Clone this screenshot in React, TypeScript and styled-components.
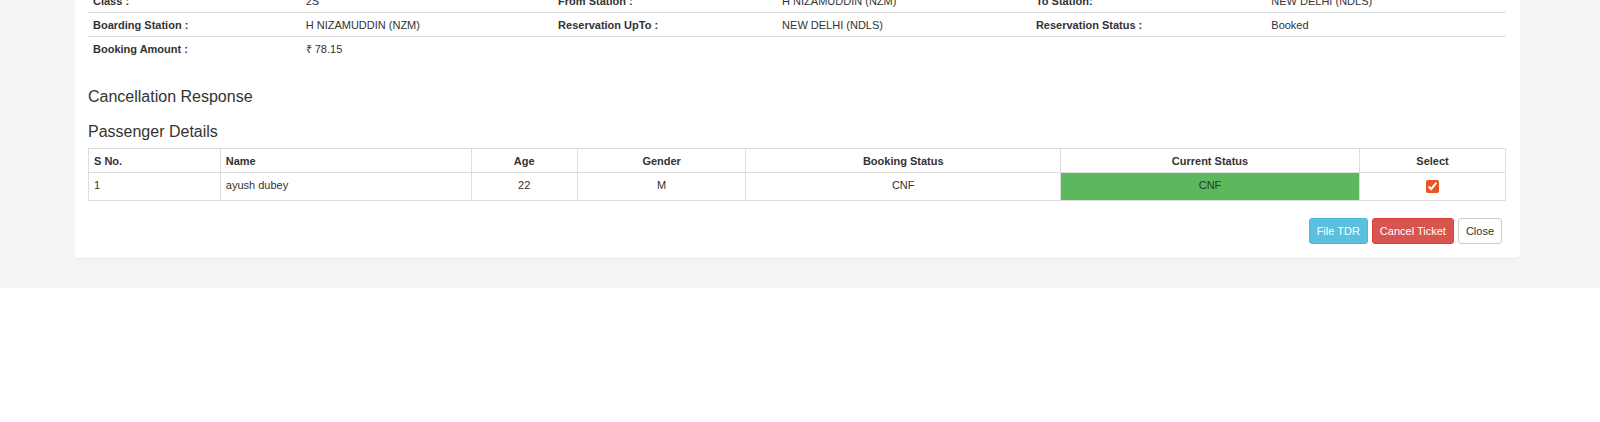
import React, { useState } from "react";
import styled, { createGlobalStyle, css } from "styled-components";

const GlobalStyle = createGlobalStyle`
  *, *::before, *::after { box-sizing: border-box; }
  body {
    margin: 0;
    background: #fff;
    color: #333;
    font-family: "Liberation Sans", Arial, sans-serif;
    font-size: 11px;
    line-height: 15px;
  }
`;

const Page = styled.main`
  display: flow-root;
  overflow: hidden;
  padding: 0 80px 30px 75px;
  background: #f4f4f4;
`;

/* The panel is scrolled up, so its first row is partly out of view. */
const Panel = styled.section`
  margin-top: -12px;
  padding: 0 14px 14px 13px;
  background: #fff;
  border-radius: 4px;
  box-shadow: 0 1px 1px rgba(0, 0, 0, 0.05);
`;

const Table = styled.table`
  width: 100%;
  table-layout: fixed;
  border-collapse: collapse;
`;

const Column = styled.col<{ $share: number }>`
  width: ${(p) => p.$share}%;
`;

const cell = css`
  padding: 5px 5px 3px;
  vertical-align: top;
  text-align: left;
`;

const InfoTable = styled(Table)`
  margin-bottom: 28px;
`;

const InfoLabel = styled.th`
  ${cell}
  border-top: 1px solid #ddd;
`;

const InfoValue = styled.td`
  ${cell}
  border-top: 1px solid #ddd;
`;

const Heading = styled.h4`
  margin: 0 0 17px;
  font-size: 16px;
  font-weight: 400;
  line-height: 18px;
`;

const TableHeading = styled(Heading)`
  margin-bottom: 7px;
`;

type CellProps = { $center?: boolean; $confirmed?: boolean };

const HeadCell = styled.th<CellProps>`
  ${cell}
  border: 1px solid #ddd;
  text-align: ${(p) => (p.$center ? "center" : "left")};
`;

const BodyCell = styled.td<CellProps>`
  ${cell}
  height: 28px;
  border: 1px solid #ddd;
  text-align: ${(p) => (p.$center ? "center" : "left")};
  background: ${(p) => (p.$confirmed ? "#5cb85c" : "transparent")};
`;

const Checkbox = styled.input`
  display: block;
  width: 13px;
  height: 13px;
  margin: 2px auto 0;
  accent-color: #e95420;
`;

const Actions = styled.footer`
  display: flex;
  justify-content: flex-end;
  gap: 4px;
  margin-top: 17px;
  padding-right: 4px;
`;

const tones = {
  info: { text: "#fff", fill: "#5bc0de", edge: "#46b8da" },
  danger: { text: "#fff", fill: "#d9534f", edge: "#d43f3a" },
  plain: { text: "#333", fill: "#fff", edge: "#ccc" },
};

const Button = styled.button<{ $tone: keyof typeof tones }>`
  height: 26px;
  padding: 1px 7px 0;
  border: 1px solid ${(p) => tones[p.$tone].edge};
  border-radius: 3px;
  background: ${(p) => tones[p.$tone].fill};
  color: ${(p) => tones[p.$tone].text};
  font: inherit;
  cursor: pointer;
`;

const infoShares = [15, 17.8, 15.8, 17.9, 16.6, 16.9];

const infoRows: [string, string][][] = [
  [["Class :", "2S"], ["From Station :", "H NIZAMUDDIN (NZM)"], ["To Station:", "NEW DELHI (NDLS)"]],
  [
    ["Boarding Station :", "H NIZAMUDDIN (NZM)"],
    ["Reservation UpTo :", "NEW DELHI (NDLS)"],
    ["Reservation Status :", "Booked"],
  ],
  [["Booking Amount :", "₹ 78.15"]],
];

const passengerColumns = [
  { title: "S No.", share: 9.3 },
  { title: "Name", share: 17.7 },
  { title: "Age", share: 7.5, center: true },
  { title: "Gender", share: 11.9, center: true },
  { title: "Booking Status", share: 22.2, center: true },
  { title: "Current Status", share: 21.1, center: true },
  { title: "Select", share: 10.3, center: true },
];

export default function App() {
  const [selected, setSelected] = useState(true);

  return (
    <>
      <GlobalStyle />
      <Page>
        <Panel>
          <InfoTable>
            <colgroup>
              {infoShares.map((share, i) => (
                <Column key={i} $share={share} />
              ))}
            </colgroup>
            <tbody>
              {infoRows.map((row) => (
                <tr key={row[0][0]}>
                  {row.map(([label, value], i) => (
                    <React.Fragment key={label}>
                      <InfoLabel scope="row">{label}</InfoLabel>
                      <InfoValue colSpan={i === row.length - 1 ? 7 - row.length * 2 : 1}>{value}</InfoValue>
                    </React.Fragment>
                  ))}
                </tr>
              ))}
            </tbody>
          </InfoTable>

          <Heading>Cancellation Response</Heading>
          <TableHeading id="passengers">Passenger Details</TableHeading>

          <Table aria-labelledby="passengers">
            <colgroup>
              {passengerColumns.map((c) => (
                <Column key={c.title} $share={c.share} />
              ))}
            </colgroup>
            <thead>
              <tr>
                {passengerColumns.map((c) => (
                  <HeadCell key={c.title} scope="col" $center={c.center}>
                    {c.title}
                  </HeadCell>
                ))}
              </tr>
            </thead>
            <tbody>
              <tr>
                <BodyCell>1</BodyCell>
                <BodyCell>ayush dubey</BodyCell>
                <BodyCell $center>22</BodyCell>
                <BodyCell $center>M</BodyCell>
                <BodyCell $center>CNF</BodyCell>
                <BodyCell $center $confirmed>
                  CNF
                </BodyCell>
                <BodyCell $center>
                  <Checkbox
                    type="checkbox"
                    aria-label="Select ayush dubey"
                    checked={selected}
                    onChange={(e) => setSelected(e.target.checked)}
                  />
                </BodyCell>
              </tr>
            </tbody>
          </Table>

          <Actions>
            <Button type="button" $tone="info">File TDR</Button>
            <Button type="button" $tone="danger">Cancel Ticket</Button>
            <Button type="button" $tone="plain">Close</Button>
          </Actions>
        </Panel>
      </Page>
    </>
  );
}
